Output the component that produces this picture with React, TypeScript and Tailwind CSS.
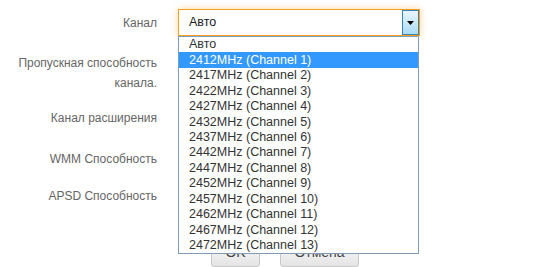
import React from "react";

const options = [
  "Авто",
  "2412MHz (Channel 1)",
  "2417MHz (Channel 2)",
  "2422MHz (Channel 3)",
  "2427MHz (Channel 4)",
  "2432MHz (Channel 5)",
  "2437MHz (Channel 6)",
  "2442MHz (Channel 7)",
  "2447MHz (Channel 8)",
  "2452MHz (Channel 9)",
  "2457MHz (Channel 10)",
  "2462MHz (Channel 11)",
  "2467MHz (Channel 12)",
  "2472MHz (Channel 13)",
];

export default function App() {
  return (
    <div
      className="w-[540px] h-[267px] overflow-hidden bg-white relative"
      style={{ fontFamily: '"Liberation Sans", Arial, sans-serif' }}
    >
      <div className="pt-[3px] flex flex-col">
        {/* Row 1 */}
        <div className="flex h-[39px] items-center">
          <div className="w-[157px] text-right text-[12px] text-[#666]">Канал</div>
          <div className="ml-[21px] relative z-10">
            <div className="w-[242px] h-[27px] border border-[#f5a020] bg-white shadow-[0_0_7px_rgba(255,160,40,0.45)] flex items-center relative">
              <span className="pl-[10px] text-[12.5px] text-[#222]">Авто</span>
              <div className="absolute right-0 top-0 bottom-0 w-[17px] border border-[#3c7fb1] bg-gradient-to-b from-[#eaf6fd] to-[#a9dbf6] flex items-center justify-center">
                <svg width="7" height="4" viewBox="0 0 7 4">
                  <polygon points="0,0 7,0 3.5,4" fill="#000" />
                </svg>
              </div>
            </div>
            <div className="absolute left-0 top-[27px] w-[241px] border border-[#7f9db9] bg-white">
              {options.map((o, i) => (
                <div
                  key={o}
                  className={
                    "h-[15.43px] flex items-center pl-[10px] text-[12.5px] leading-none " +
                    (i === 1 ? "bg-[#3399ff] text-white" : "text-[#333]")
                  }
                >
                  {o}
                </div>
              ))}
            </div>
          </div>
        </div>
        {/* Row 2 */}
        <div className="flex h-[61px] items-center">
          <div className="w-[157px] text-right text-[12px] text-[#666] leading-[20px]">
            Пропускная способность
            <br />
            канала.
          </div>
        </div>
        {/* Row 3 */}
        <div className="flex h-[30px] items-center">
          <div className="w-[157px] text-right text-[12px] text-[#666]">Канал расширения</div>
        </div>
        {/* Row 4 */}
        <div className="flex h-[52px] items-center">
          <div className="w-[157px] text-right text-[12px] text-[#666]">WMM Способность</div>
        </div>
        {/* Row 5 */}
        <div className="flex h-[22px] items-center">
          <div className="w-[157px] text-right text-[12px] text-[#666]">APSD Способность</div>
        </div>
        {/* Buttons */}
        <div className="flex mt-[31px] ml-[211px] gap-[20px]">
          <button className="w-[49px] h-[29px] rounded-[3px] border border-[#c8c8c8] bg-gradient-to-b from-[#fdfdfd] to-[#e4e4e4] text-[14px] text-[#444]">
            OK
          </button>
          <button className="w-[79px] h-[29px] rounded-[3px] border border-[#c8c8c8] bg-gradient-to-b from-[#fdfdfd] to-[#e4e4e4] text-[14px] text-[#444]">
            Отмена
          </button>
        </div>
      </div>
    </div>
  );
}
